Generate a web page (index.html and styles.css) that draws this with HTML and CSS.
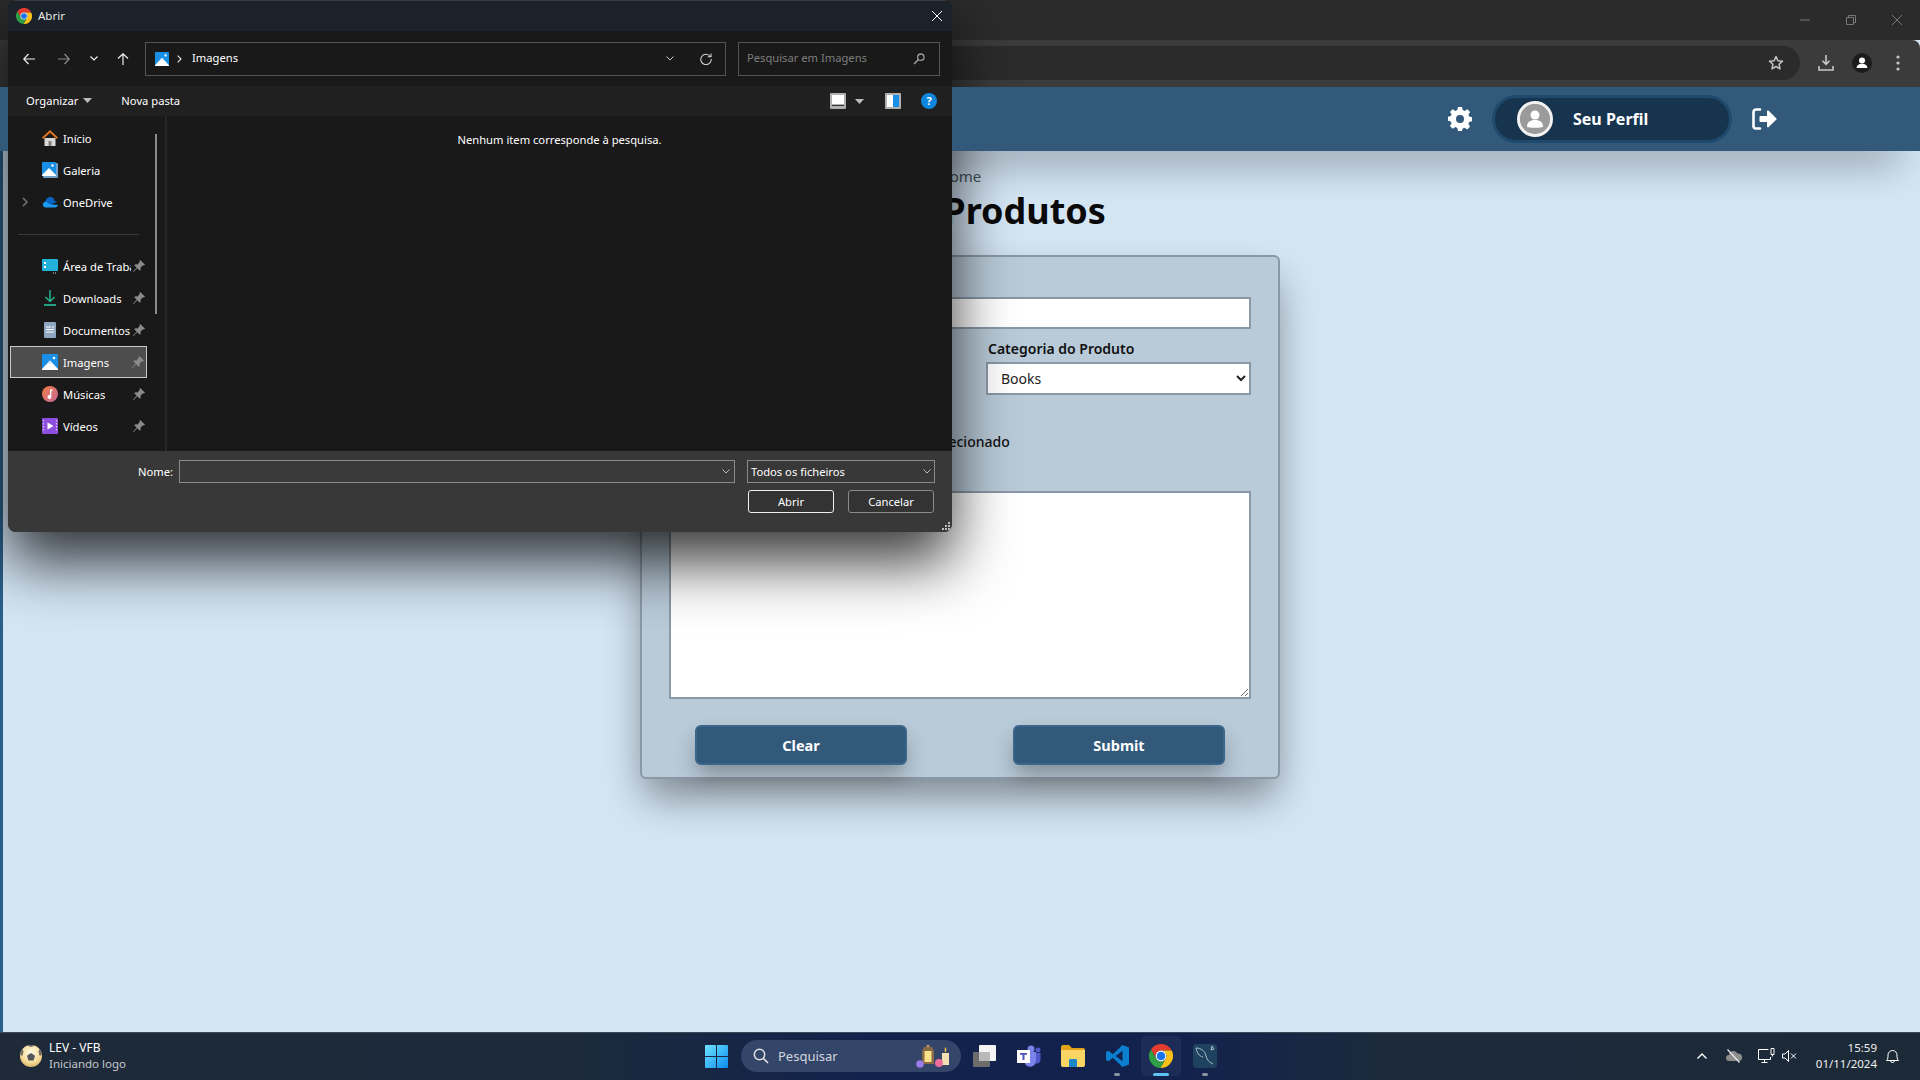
FILE: index.html
```html
<!DOCTYPE html>
<html lang="pt">
<head>
<meta charset="utf-8">
<title>Produtos</title>
<link rel="stylesheet" href="styles.css">
</head>
<body>
<svg class="defs" width="0" height="0" aria-hidden="true">
  <symbol id="pin" viewBox="0 0 14 14"><path d="M8.3 1 13 5.7l-1 .8-1-.3-2.4 2.4.1 2.1-1 1-2.4-2.4L1.5 13 1 12.500l3.700-3.800L2.300 6.300l1-1 2.100.1 2.400-2.400-.3-1z" fill="#8b8b8b"/></symbol>
  <symbol id="pics" viewBox="0 0 16 16"><rect width="16" height="16" rx="1" fill="#1a8fe6"/><path d="M0 15 8 6.500 16 15v1H0z" fill="#fff"/><path d="M8 6.500 5.500 9.200 8 10l2.500-.8z" fill="#cfe8fb"/><circle cx="12" cy="4" r="1.300" fill="#fff"/></symbol>
  <symbol id="chrome" viewBox="0 0 24 24">
    <path d="M12 6.600H22.720A12 12 0 0 0 1.960 5.420L7.320 14.700A5.400 5.400 0 0 1 12 6.600Z" fill="#e33b2e"/>
    <path d="M16.680 14.700 11.320 23.980A12 12 0 0 0 22.720 6.600H12A5.400 5.400 0 0 1 16.680 14.700Z" fill="#fbc116"/>
    <path d="M7.320 14.700 1.960 5.420A12 12 0 0 0 11.320 23.980L16.680 14.700A5.400 5.400 0 0 1 7.320 14.700Z" fill="#2f9e44"/>
    <circle cx="12" cy="12" r="5.400" fill="#fff"/><circle cx="12" cy="12" r="4.300" fill="#1a73e8"/>
  </symbol>
</svg>

<div class="desktop">
  <div class="browser">
    <div class="titlebar">
      <span class="winbtn"><svg width="10" height="10" viewBox="0 0 10 10"><path d="M0 5h10" stroke="#777" fill="none"/></svg></span>
      <span class="winbtn"><svg width="10" height="10" viewBox="0 0 10 10"><path d="M.5 2.500h7v7h-7zM2.500 2.500V.5h7v7h-2" stroke="#777" fill="none"/></svg></span>
      <span class="winbtn"><svg width="10" height="10" viewBox="0 0 10 10"><path d="M0 0l10 10M10 0 0 10" stroke="#777" fill="none"/></svg></span>
    </div>
    <div class="toolbar">
      <div class="omnibox">
        <svg width="16" height="16" viewBox="0 0 16 16"><path d="m8 1.500 1.900 4.200 4.600.5-3.400 3.100.9 4.500-4-2.300-4 2.300.9-4.500L1.500 6.200l4.600-.5z" fill="none" stroke="#c7c7c7" stroke-width="1.500" stroke-linejoin="round"/></svg>
      </div>
      <span class="toolbtn"><svg width="16" height="16" viewBox="0 0 16 16"><path d="M8 0v9M4.500 5.800 8 9.300l3.500-3.500M1 11v4h14v-4" fill="none" stroke="#c7c7c7" stroke-width="1.600"/></svg></span>
      <span class="toolbtn"><svg width="20" height="20" viewBox="0 0 20 20"><circle cx="10" cy="10" r="10" fill="#1c1c1c"/><circle cx="10" cy="7.500" r="3" fill="#fff"/><path d="M4.500 15c.3-3 2.500-4.200 5.500-4.200s5.200 1.200 5.500 4.200z" fill="#fff"/></svg></span>
      <span class="toolbtn"><svg width="4" height="16" viewBox="0 0 4 16"><circle cx="2" cy="2" r="1.600" fill="#c7c7c7"/><circle cx="2" cy="8" r="1.600" fill="#c7c7c7"/><circle cx="2" cy="14" r="1.600" fill="#c7c7c7"/></svg></span>
    </div>
    <header class="apphead">
      <svg width="24" height="24" viewBox="0 0 24 24"><path fill="#fff" fill-rule="evenodd" d="M10 0h4l.7 3.100 1.900.8L19.300 2.200l2.800 2.800-1.700 2.700.8 1.900 3 .7v4l-3 .7-.8 1.900 1.700 2.700-2.800 2.800-2.700-1.700-1.900.8L14 24h-4l-.7-3.100-1.900-.8-2.700 1.700-2.800-2.800 1.700-2.700-.8-1.900L0 13.700v-4l2.800-.7.8-1.900L1.900 5l2.800-2.800 2.700 1.700 1.900-.8zM12 8a4 4 0 1 0 0 8 4 4 0 0 0 0-8z"/></svg>
      <div class="profile">
        <span class="avatar"><svg width="30" height="30" viewBox="0 0 30 30"><circle cx="15" cy="15" r="15" fill="#9b9b9b"/><circle cx="15" cy="11" r="4.500" fill="#fff"/><path d="M7 23c0-5 3-7 8-7s8 2 8 7c-2 1-14 1-16 0z" fill="#fff"/></svg></span>
        <span class="profile-name">Seu Perfil</span>
      </div>
      <svg width="25" height="22" viewBox="0 0 25 22"><path d="M8 1.500H4A2.500 2.500 0 0 0 1.500 4v14A2.500 2.500 0 0 0 4 20.500h4" fill="none" stroke="#fff" stroke-width="2.600" stroke-linecap="round"/><path d="M15 3.500a1 1 0 0 1 1.700-.7l7.500 7.400a1 1 0 0 1 0 1.500l-7.500 7.400a1 1 0 0 1-1.700-.7V14H8.500a1 1 0 0 1-1-1V9a1 1 0 0 1 1-1H15z" fill="#fff"/></svg>
    </header>
    <div class="apprest">
      <div class="rail"></div>
      <main class="page">
        <p class="crumb">Home</p>
        <h1 class="pagetitle">Inserir Produtos</h1>
        <form class="card">
          <div class="field">
            <label class="lbl">Nome do Produto</label>
            <input class="ctl" type="text">
          </div>
          <div class="two">
            <div class="field">
              <label class="lbl">Preço</label>
              <input class="ctl" type="text">
            </div>
            <div class="field">
              <label class="lbl">Categoria do Produto</label>
              <select class="ctl sel"><option>Books</option></select>
            </div>
          </div>
          <div class="filerow"><span class="filebtn">Escolher ficheiro</span><span>Nenhum ficheiro selecionado</span></div>
          <div class="field descfield">
            <label class="lbl">Descrição</label>
            <textarea class="ctl area"></textarea>
          </div>
          <div class="actions">
            <button class="btn" type="button">Clear</button>
            <button class="btn" type="button">Submit</button>
          </div>
        </form>
      </main>
    </div>
  </div>

  <footer class="taskbar">
    <div class="tb-left">
      <svg width="22" height="22" viewBox="0 0 22 22"><defs><radialGradient id="ball" cx=".5" cy=".35" r=".75"><stop offset="0" stop-color="#fffbe9"/><stop offset=".6" stop-color="#f6dc97"/><stop offset="1" stop-color="#c9a255"/></radialGradient></defs><circle cx="11" cy="11" r="11" fill="url(#ball)"/><path d="m11 8 4 2.800-1.500 4.700h-5L7 10.800z" fill="#55565a"/><path d="M7 .8 11 2l4-1.200A11 11 0 0 0 7 .8zM.2 10l2.300.8L3.500 6.500 2.500 4A11 11 0 0 0 .2 10zM21.800 10l-2.300.8-1-4.300 1-2.500A11 11 0 0 1 21.800 10z" fill="#6d6a62"/></svg>
      <div class="tb-news"><span class="tb-news-a">LEV - VFB</span><span class="tb-news-b">Iniciando logo</span></div>
    </div>
    <div class="tb-center">
      <svg class="ti-start" width="23" height="23" viewBox="0 0 23 23"><defs><linearGradient id="win" x1="0" y1="0" x2="1" y2="1"><stop offset="0" stop-color="#6fe3ff"/><stop offset="1" stop-color="#0b8df0"/></linearGradient></defs><path fill="url(#win)" d="M0 1a1 1 0 0 1 1-1h10v11H0zM12 0h10a1 1 0 0 1 1 1v10H12zM0 12h11v11H1a1 1 0 0 1-1-1zM12 12h11v10a1 1 0 0 1-1 1H12z"/></svg>
      <div class="tb-search">
        <svg width="16" height="16" viewBox="0 0 16 16"><circle cx="6.500" cy="6.500" r="5.200" fill="none" stroke="#e0e0e0" stroke-width="1.500"/><path d="m10.500 10.500 4.500 4.500" stroke="#e0e0e0" stroke-width="1.700"/></svg>
        <span class="tb-search-txt">Pesquisar</span>
        <svg class="tb-deco" width="38" height="24" viewBox="0 0 38 24"><path d="M9 3h8l2 4v13H7V7z" fill="#8a6a44"/><rect x="9.500" y="7" width="7" height="11" fill="#fbe28a"/><circle cx="13" cy="2" r="1.500" fill="#b79163"/><path d="M27 9h7v12h-7z" fill="#f3e1b3"/><path d="M30.500 3c1.200 2 1.200 4 0 5.500-1.200-1.500-1.200-3.500 0-5.500z" fill="#f5b83e"/><circle cx="5" cy="20" r="3.800" fill="#9a7ae8"/><circle cx="24" cy="19" r="4" fill="#ec6f9b"/></svg>
      </div>
      <svg class="ti-task" width="23" height="22" viewBox="0 0 23 22"><rect y="7" width="17" height="15" rx="1" fill="#6c6c6c"/><rect x="6" width="17" height="16" rx="1" fill="#f4f4f4"/><rect x="6" y="7" width="11" height="9" fill="#b9b9b9"/></svg>
      <svg class="ti-teams" width="24" height="22" viewBox="0 0 24 22"><circle cx="14" cy="4" r="3.500" fill="#7b83eb"/><circle cx="21" cy="5" r="2.500" fill="#5059c9"/><path d="M17 8h6.500v7a4 4 0 0 1-5 3.500z" fill="#5059c9"/><path d="M8 7h11v9a6 6 0 0 1-11 3z" fill="#7b83eb"/><rect y="5" width="13" height="13" fill="#fff"/><path d="M3 8h7v1.800H7.500V15h-2V9.800H3z" fill="#4b53bc"/></svg>
      <svg class="ti-folder" width="24" height="22" viewBox="0 0 24 22"><path d="M0 2a2 2 0 0 1 2-2h6l3 3h11a2 2 0 0 1 2 2v3H0z" fill="#e4a41a"/><path d="M0 5h24v15a2 2 0 0 1-2 2H2a2 2 0 0 1-2-2z" fill="#fcd664"/><path d="M8 15a1 1 0 0 1 1-1h6a1 1 0 0 1 1 1v7H8z" fill="#1e87c9"/></svg>
      <span class="ti-wrap ti-code"><svg width="24" height="24" viewBox="0 0 24 24"><path fill="#0b7fd0" fill-rule="evenodd" d="M17.500 1 7.800 10.200 3.400 6.800 1 8v8l2.400 1.200 4.400-3.400 9.700 9.200L24 20.500v-17zM17.500 6.800v10.400L10.700 12z"/></svg><i class="dot"></i></span>
      <span class="ti-wrap ti-chrome"><svg width="24" height="24"><use href="#chrome"/></svg><i class="bar"></i></span>
      <span class="ti-wrap ti-wb"><svg width="24" height="24" viewBox="0 0 24 24"><rect width="24" height="24" rx="3" fill="#1e4260"/><path d="M3 4c5 0 9 3 10 8 1 4 3 6 7 8M3 4c1 5 3 8 7 9M19 2l2 3-3 1z" fill="none" stroke="#aebfcb" stroke-width="1"/></svg><i class="dot"></i></span>
    </div>
    <div class="tb-right">
      <svg class="tr-a" width="10" height="6" viewBox="0 0 10 6"><path d="M.5 5.500 5 1l4.500 4.500" fill="none" stroke="#fff" stroke-width="1.400"/></svg>
      <svg class="tr-b" width="16" height="14" viewBox="0 0 16 14"><path d="M3 12a3 3 0 0 1 0-6 4.500 4.500 0 0 1 8.500-1.500A3.800 3.800 0 0 1 13 12z" fill="#8d8d8d"/><path d="M1.500.5 13.500 13.500" stroke="#e8e8e8" stroke-width="1.300"/></svg>
      <svg class="tr-c" width="17" height="16" viewBox="0 0 17 16"><path d="M10.500 1.500H.5v10h12V9M6.500 11.500v3M3.500 14.500h6" fill="none" stroke="#fff"/><path d="M13 .5h3v6h-3zM14.500 6.500v2" fill="none" stroke="#fff"/></svg>
      <svg class="tr-d" width="15" height="12" viewBox="0 0 15 12"><path d="M.5 4v4h2.500l3.500 3.500V.5L3 4zM9 3.500l5 5M14 3.500l-5 5" fill="none" stroke="#fff"/></svg>
      <div class="clock"><span>15:59</span><span>01/11/2024</span></div>
      <svg class="tr-e" width="13" height="15" viewBox="0 0 13 15"><path d="M.5 11.500c1.500-1.500 1.500-3 1.500-5.500a4.500 4.500 0 0 1 9 0c0 2.500 0 4 1.500 5.500zM4.500 11.500a2 2 0 0 0 4 0" fill="none" stroke="#fff"/></svg>
    </div>
  </footer>

  <section class="dialog">
    <div class="dlg-title">
      <svg width="16" height="16"><use href="#chrome" width="16" height="16"/></svg>
      <span class="dlg-title-txt">Abrir</span>
      <svg class="dlg-close" width="10" height="10" viewBox="0 0 10 10"><path d="M0 0l10 10M10 0 0 10" stroke="#fff" fill="none"/></svg>
    </div>
    <div class="dlg-nav">
      <div class="navbtns">
        <svg width="12" height="12" viewBox="0 0 12 12"><path d="M12 6H1M5.500 1 .8 6l4.700 5" fill="none" stroke="#f0f0f0" stroke-width="1.200"/></svg>
        <svg width="12" height="12" viewBox="0 0 12 12"><path d="M0 6h11M6.500 1l4.700 5-4.700 5" fill="none" stroke="#8a8a8a" stroke-width="1.200"/></svg>
        <svg width="8" height="5" viewBox="0 0 8 5"><path d="M.5.500 4 4 7.500.5" fill="none" stroke="#f0f0f0" stroke-width="1.200"/></svg>
        <svg width="12" height="12" viewBox="0 0 12 12"><path d="M6 12V1M1 5.500 6 .8l5 4.700" fill="none" stroke="#f0f0f0" stroke-width="1.200"/></svg>
      </div>
      <div class="addr">
        <svg width="14" height="14"><use href="#pics" width="14" height="14"/></svg>
        <svg class="addr-sep" width="5" height="8" viewBox="0 0 5 8"><path d="m.7.700 3.300 3.300L.7 7.300" fill="none" stroke="#e8e8e8" stroke-width="1.100"/></svg>
        <span class="addr-txt">Imagens</span>
        <svg class="addr-drop" width="8" height="5" viewBox="0 0 8 5"><path d="M.5.500 4 4 7.500.5" fill="none" stroke="#cfcfcf"/></svg>
        <svg class="addr-ref" width="12" height="12" viewBox="0 0 12 12"><path d="M10.300 3.500A5.200 5.200 0 1 0 11.200 6M11 .5v3.300H7.700" fill="none" stroke="#cfcfcf" stroke-width="1.100"/></svg>
      </div>
      <div class="searchbox">
        <span class="searchbox-txt">Pesquisar em Imagens</span>
        <svg width="12" height="12" viewBox="0 0 12 12"><circle cx="7.800" cy="4.200" r="3.200" fill="none" stroke="#9a9a9a" stroke-width="1.300"/><path d="M5.500 6.500 1 11" stroke="#9a9a9a" stroke-width="1.600"/></svg>
      </div>
    </div>
    <div class="dlg-tools">
      <span class="tool-org">Organizar<svg width="9" height="5" viewBox="0 0 9 5"><path d="M0 0h9L4.500 5z" fill="#bdbdbd"/></svg></span>
      <span class="tool-new">Nova pasta</span>
      <span class="tool-right">
        <svg width="16" height="16" viewBox="0 0 16 16"><rect width="16" height="16" rx="1" fill="#b0b0b0"/><rect x="2" y="2" width="12" height="9" fill="#fff"/><path d="M2 12.500h12" stroke="#333"/></svg>
        <svg class="tool-drop" width="9" height="5" viewBox="0 0 9 5"><path d="M0 0h9L4.500 5z" fill="#bdbdbd"/></svg>
        <svg class="tool-pane" width="16" height="16" viewBox="0 0 16 16"><rect width="16" height="16" rx="1" fill="#b0b0b0"/><rect x="2" y="2" width="12" height="12" fill="#fff"/><rect x="8" y="2" width="6" height="12" fill="#1a8fe6"/></svg>
        <span class="help">?</span>
      </span>
    </div>
    <div class="dlg-body">
      <nav class="side">
        <div class="side-item"><span class="expander"></span><svg width="16" height="16" viewBox="0 0 16 16"><path d="M2.500 8v8h11V8z" fill="#d8d8d8"/><path d="M6.500 11h3v5h-3z" fill="#8a7f78"/><path d="M8 0 0 7.500 1.200 9 8 2.700 14.800 9 16 7.500z" fill="#e3741f"/></svg><span class="side-txt">Início</span></div>
        <div class="side-item"><span class="expander"></span><svg width="16" height="16" viewBox="0 0 16 16"><rect x="1" y="1" width="15" height="15" rx="1" fill="#6f9fc9"/><rect width="14" height="14" rx="1" fill="#1a8fe6"/><path d="M0 13 7 6l7 7v1H0z" fill="#fff"/><circle cx="10.500" cy="3.500" r="1.200" fill="#fff"/></svg><span class="side-txt">Galeria</span></div>
        <div class="side-item"><span class="expander"><svg width="6" height="10" viewBox="0 0 6 10"><path d="m1 1 4 4-4 4" fill="none" stroke="#777" stroke-width="1.500"/></svg></span><svg width="16" height="16" viewBox="0 0 16 16"><path d="M4 5.500A4.500 4.500 0 0 1 12.500 7 3 3 0 0 1 15 8L7 11 3 8.500z" fill="#0a64c2"/><path d="M3.500 13.500A3 3 0 0 1 2.800 7.700C5 7.500 6 9 7 10l9 1c-.3 1.500-1.500 2.500-3 2.500z" fill="#1a9af0"/></svg><span class="side-txt">OneDrive</span></div>
        <div class="side-sep"></div>
        <div class="side-item"><span class="expander"></span><svg width="16" height="16" viewBox="0 0 16 16"><rect y="1" width="16" height="12" rx="1" fill="#22b1d9"/><rect x="2" y="4" width="2" height="2" fill="#fff"/><rect x="2" y="8" width="2" height="2" fill="#fff"/><path d="M11 15h4" stroke="#bfe7f3" stroke-dasharray="1 1"/></svg><span class="side-txt">Área de Trabalho</span><svg class="pin" width="14" height="14"><use href="#pin"/></svg></div>
        <div class="side-item"><span class="expander"></span><svg width="16" height="16" viewBox="0 0 16 16"><path d="M8 0v11M3.500 7 8 11.500 12.500 7" fill="none" stroke="#23b28f" stroke-width="1.500"/><path d="M2 15h12" stroke="#23b28f" stroke-width="1.800"/></svg><span class="side-txt">Downloads</span><svg class="pin" width="14" height="14"><use href="#pin"/></svg></div>
        <div class="side-item"><span class="expander"></span><svg width="16" height="16" viewBox="0 0 16 16"><rect x="2" width="12" height="16" rx="1" fill="#8ea6c2"/><path d="M4 5h5M10 5h2M4 7.500h8M4 10h8" stroke="#fff" stroke-width="1.100"/></svg><span class="side-txt">Documentos</span><svg class="pin" width="14" height="14"><use href="#pin"/></svg></div>
        <div class="side-item is-current"><span class="expander"></span><svg width="16" height="16" viewBox="0 0 16 16"><use href="#pics"/></svg><span class="side-txt">Imagens</span><svg class="pin" width="14" height="14"><use href="#pin"/></svg></div>
        <div class="side-item"><span class="expander"></span><svg width="16" height="16" viewBox="0 0 16 16"><defs><linearGradient id="mus" x1="0" y1="0" x2="1" y2="1"><stop offset="0" stop-color="#ef7d3c"/><stop offset="1" stop-color="#c76aa0"/></linearGradient></defs><circle cx="8" cy="8" r="8" fill="url(#mus)"/><path d="M8 3.500h2.500v1.500H9.300v6a1.900 1.900 0 1 1-1.300-1.800z" fill="#fff"/></svg><span class="side-txt">Músicas</span><svg class="pin" width="14" height="14"><use href="#pin"/></svg></div>
        <div class="side-item"><span class="expander"></span><svg width="16" height="16" viewBox="0 0 16 16"><rect width="16" height="16" rx="1" fill="#8e4fe0"/><path d="M5.500 4.500v7l6-3.500z" fill="#fff"/><path d="M1.500 2v12M14.500 2v12" stroke="#d4bdf5" stroke-width="1.200" stroke-dasharray="1.500 1.500"/></svg><span class="side-txt">Vídeos</span><svg class="pin" width="14" height="14"><use href="#pin"/></svg></div>
        <i class="side-scroll"></i>
      </nav>
      <div class="files"><p class="empty">Nenhum item corresponde à pesquisa.</p></div>
    </div>
    <div class="dlg-foot">
      <div class="foot-row">
        <span class="foot-lbl">Nome:</span>
        <div class="combo combo-name"><svg width="8" height="5" viewBox="0 0 8 5"><path d="M.5.500 4 4 7.500.5" fill="none" stroke="#bdbdbd"/></svg></div>
        <div class="combo combo-type"><span>Todos os ficheiros</span><svg width="8" height="5" viewBox="0 0 8 5"><path d="M.5.500 4 4 7.500.5" fill="none" stroke="#bdbdbd"/></svg></div>
      </div>
      <div class="foot-row foot-btns">
        <span class="dbtn dbtn-main">Abrir</span>
        <span class="dbtn dbtn-alt">Cancelar</span>
      </div>
      <svg class="grip" width="8" height="8" viewBox="0 0 8 8"><path d="M6 0h2v2H6zM3 3h2v2H3zM6 3h2v2H6zM0 6h2v2H0zM3 6h2v2H3zM6 6h2v2H6z" fill="#bdbdbd"/></svg>
    </div>
  </section>
</div>
</body>
</html>
```

FILE: styles.css
```css
* { box-sizing: border-box; }
html, body { margin: 0; padding: 0; height: 100%; overflow: hidden; }
body { font-family: "Noto Sans", sans-serif; background: #d4e5f4; }
.defs { position: absolute; }
svg { display: block; flex: none; }

.desktop { position: relative; width: 1920px; height: 1080px; display: flex; flex-direction: column; overflow: hidden; }

/* browser */
.browser { flex: 1; display: flex; flex-direction: column; min-height: 0; }
.titlebar { height: 40px; background: #2b2b2b; display: flex; justify-content: flex-end; }
.winbtn { width: 46px; display: flex; align-items: center; justify-content: center; }
.toolbar { height: 47px; background: #3b3b3b; border-radius: 0 8px 0 0; display: flex; align-items: center; padding: 0 4px 1px 200px; }
.omnibox { flex: 1; height: 34px; margin-right: 8px; background: #2b2b2b; border-radius: 0 17px 17px 0; display: flex; align-items: center; justify-content: flex-end; padding-right: 16px; }
.toolbtn { width: 36px; display: flex; align-items: center; justify-content: center; }

.apphead { position: relative; z-index: 2; height: 64px; flex: none; background: #32597a; display: flex; align-items: center; justify-content: flex-end; gap: 20px; padding-right: 143px; box-shadow: 0 30px 40px -20px rgba(0,0,0,.4); }
.profile { width: 240px; height: 48px; background: #16344e; border: 3px solid #1f4a6d; border-radius: 24px; display: flex; align-items: center; gap: 21px; padding-left: 22px; }
.avatar { width: 36px; height: 36px; border-radius: 50%; background: #9b9b9b; border: 3px solid #f2f2f2; display: flex; align-items: center; justify-content: center; overflow: hidden; }
.profile-name { color: #fff; font-size: 16px; font-weight: 700; margin-left: -1px; }

.apprest { flex: 1; display: flex; min-height: 0; }
.rail { width: 3px; background: #2a5f8a; }
.page { flex: 1; display: flex; flex-direction: column; align-items: center; padding-right: 3px; background: #d4e5f4; }
.crumb { margin: 15px 0 0; font-size: 15px; line-height: 20px; color: #4a5560; }
.pagetitle { margin: 2px 0 0; font-size: 36px; line-height: 46px; font-weight: 700; color: #0a0a0a; }

.card { width: 640px; margin-top: 21px; padding: 17px 27px 12px; background: #b9cad8; border: 2px solid #8a98a5; border-radius: 6px; display: flex; flex-direction: column; box-shadow: 0 22px 40px -4px rgba(0,0,0,.42); }
.field { display: flex; flex-direction: column; }
.lbl { font-size: 14px; font-weight: 600; line-height: 20px; color: #111; padding-left: 2px; margin-bottom: 3px; }
.ctl { border: 2px solid #8a98a5; background: #fff; border-radius: 0; font-family: inherit; font-size: 14px; color: #222; margin: 0; outline: 0; }
input.ctl { height: 32px; }
.sel { height: 33px; padding-left: 9px; }
.two { display: grid; grid-template-columns: 1fr 265px; gap: 54px; margin-top: 10px; }
.filerow { display: flex; align-items: center; gap: 6px; height: 20px; margin-top: 36px; font-size: 14px; font-weight: 500; color: #111; }
.filebtn { padding: 0 14px; }
.descfield { margin-top: 17px; }
.area { height: 208px; resize: both; }
.actions { display: flex; justify-content: space-between; padding: 0 26px; margin-top: 26px; }
.btn { width: 212px; height: 40px; background: #32597a; border: 2px solid #3a668c; border-radius: 6px; color: #fff; font: 700 14.500px "Noto Sans", sans-serif; box-shadow: 0 12px 22px -2px rgba(0,0,0,.3); }

/* taskbar */
.taskbar { height: 48px; flex: none; position: relative; border-top: 1px solid #3b4a58; padding-bottom: 1px; background: linear-gradient(90deg, #1e2a38 0%, #1c2a3c 30%, #12224c 45%, #12224c 62%, #1c2a3c 72%, #1c2937 100%); display: flex; align-items: center; color: #fff; font-size: 12px; }
.tb-left { width: 705px; display: flex; align-items: center; gap: 7px; padding-left: 20px; }
.tb-news { display: flex; flex-direction: column; line-height: 16px; }
.tb-news-a { font-size: 12px; }
.tb-news-b { color: #c4c8cc; font-size: 11.500px; }
.tb-center { display: flex; align-items: center; }
.tb-search { width: 220px; height: 32px; margin: 0 12px 0 13px; padding: 0 8px 0 12px; background: #34456a; border-radius: 16px; display: flex; align-items: center; gap: 9px; }
.tb-search-txt { flex: 1; color: #d2d6dc; font-size: 13px; }
.ti-teams { margin-left: 21px; }
.ti-folder { margin-left: 20px; }
.ti-wrap { position: relative; width: 40px; height: 40px; display: flex; align-items: center; justify-content: center; }
.ti-code { margin-left: 12px; }
.ti-chrome { margin-left: 4px; background: #1c2c56; border-radius: 4px; }
.ti-wb { margin-left: 4px; }
.dot { position: absolute; left: 17px; bottom: 0; width: 6px; height: 3px; border-radius: 2px; background: #8c96a5; }
.bar { position: absolute; left: 12px; bottom: 0; width: 16px; height: 3px; border-radius: 2px; background: #5fc3f4; }
.tb-right { flex: 1; display: flex; align-items: center; justify-content: flex-end; padding-right: 21px; }
.tr-b { margin-left: 19px; }
.tr-c { margin-left: 16px; }
.tr-d { margin-left: 7px; }
.clock { margin-left: 17px; display: flex; flex-direction: column; align-items: flex-end; line-height: 16px; font-size: 11.500px; color: #f0f0f0; width: 63px; }
.tr-e { margin-left: 9px; }

/* file dialog (window on the desktop) */
.dialog { position: absolute; left: 8px; top: 0; width: 944px; height: 532px; display: flex; flex-direction: column; background: #191919; border-radius: 8px; overflow: hidden; font-family: "Noto Sans", sans-serif; font-size: 11.200px; color: #fff; z-index: 3; }
.desktop::after { content: ""; position: absolute; left: 8px; top: 0; width: 944px; height: 532px; border-radius: 8px; box-shadow: 0 30px 60px rgba(0,0,0,.78); z-index: 0; }
.dlg-title { height: 31px; flex: none; background: #1b2229; border-top: 1px solid #3a3a3a; display: flex; align-items: center; padding: 0 0 1px 8px; gap: 6px; }
.dlg-title-txt { flex: 1; font-size: 11.500px; color: #e8e8e8; }
.dlg-close { margin-right: 10px; }
.dlg-nav { height: 55px; flex: none; display: flex; align-items: center; padding: 0 12px 0 6px; }
.navbtns { width: 131px; display: grid; grid-template-columns: 30px 40px 20px 38px; justify-items: center; align-items: center; }
.addr { width: 581px; height: 34px; margin-bottom: 0; border: 1px solid #555; display: flex; align-items: center; padding: 0 13px 0 9px; }
.addr-sep { margin: 0 10px 0 8px; }
.addr-txt { flex: 1; padding-bottom: 2px; }
.addr-ref { margin-left: 26px; }
.searchbox { width: 202px; height: 34px; margin-left: 12px; border: 1px solid #555; display: flex; align-items: center; justify-content: space-between; padding: 0 14px 0 8px; color: #7d7d7d; }
.searchbox-txt { padding-bottom: 2px; }
.dlg-tools { height: 30px; flex: none; background: #202020; display: flex; align-items: center; padding: 0 15px 2px 18px; }
.tool-org { display: flex; align-items: center; gap: 5px; }
.tool-new { margin-left: 29px; }
.tool-right { margin: 2px 0 0 auto; display: flex; align-items: center; }
.tool-drop { margin-left: 9px; }
.tool-pane { margin-left: 21px; }
.help { width: 16px; height: 16px; margin-left: 20px; border-radius: 50%; background: #0f86dd; color: #fff; font-size: 11px; font-weight: 700; line-height: 16px; text-align: center; }
.dlg-body { flex: 1; display: flex; min-height: 0; }
.side { position: relative; width: 159px; flex: none; border-right: 2px solid #262626; padding: 6px 0 0 2px; overflow: hidden; }
.side-item { width: 137px; height: 32px; display: flex; align-items: center; padding-left: 8px; color: #fff; }
.is-current { background: #4d4d4d; border: 1px solid #c8c8c8; padding-left: 7px; }
.expander { width: 24px; padding-left: 4px; flex: none; }
.side-txt { flex: 1; min-width: 0; margin-left: 5px; white-space: nowrap; overflow: hidden; }
.pin { margin: 0 1px 0 1px; }
.side-sep { width: 121px; height: 1px; margin: 16px 0 15px 8px; background: #3a3a3a; }
.side-scroll { position: absolute; left: 147px; top: 18px; width: 2px; height: 180px; background: #8a8a8a; }
.files { flex: 1; text-align: center; }
.empty { margin: 15px 0 0; line-height: 18px; }
.dlg-foot { position: relative; height: 81px; flex: none; background: #383838; padding-top: 9px; }
.foot-row { display: flex; align-items: center; justify-content: flex-end; padding-right: 17px; gap: 6px; }
.combo { height: 23px; border: 1px solid #8a8a8a; background: #383838; display: flex; align-items: center; justify-content: flex-end; padding: 0 3px 0 3px; }
.combo-name { width: 556px; background: #3a3a3a; padding-right: 4px; }
.combo-type { width: 188px; margin-left: 6px; justify-content: space-between; }
.foot-btns { margin-top: 7px; gap: 14px; padding-right: 18px; }
.dbtn { width: 86px; height: 23px; border-radius: 3px; display: flex; align-items: center; justify-content: center; background: #333; border: 1px solid #8a8a8a; }
.dbtn-main { border-color: #f0f0f0; }
.grip { position: absolute; right: 2px; bottom: 2px; }
```
